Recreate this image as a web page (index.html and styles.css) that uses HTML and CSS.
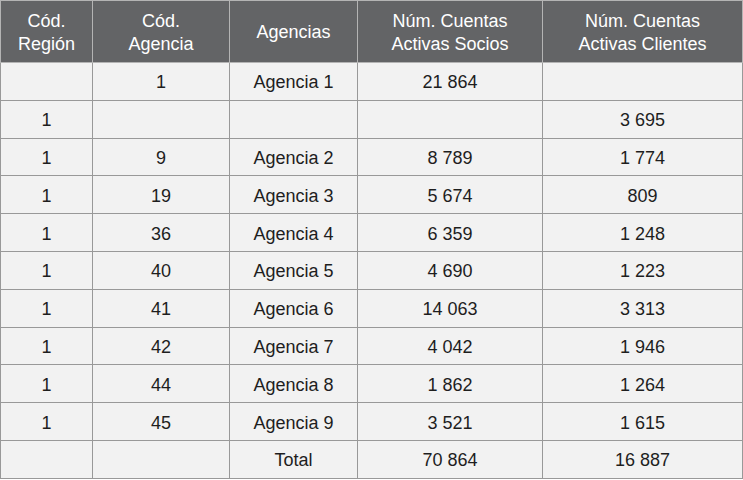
FILE: index.html
```html
<!DOCTYPE html>
<html lang="es">
<head>
<meta charset="utf-8">
<link rel="stylesheet" href="styles.css">
</head>
<body>
<table class="tabla">
  <colgroup>
    <col class="c1"><col class="c2"><col class="c3"><col class="c4"><col class="c5">
  </colgroup>
  <thead>
    <tr>
      <th>Cód.<br>Región</th>
      <th>Cód.<br>Agencia</th>
      <th>Agencias</th>
      <th>Núm. Cuentas<br>Activas Socios</th>
      <th>Núm. Cuentas<br>Activas Clientes</th>
    </tr>
  </thead>
  <tbody>
    <tr><td></td><td>1</td><td>Agencia 1</td><td>21 864</td><td></td></tr>
    <tr><td>1</td><td></td><td></td><td></td><td>3 695</td></tr>
    <tr><td>1</td><td>9</td><td>Agencia 2</td><td>8 789</td><td>1 774</td></tr>
    <tr><td>1</td><td>19</td><td>Agencia 3</td><td>5 674</td><td>809</td></tr>
    <tr><td>1</td><td>36</td><td>Agencia 4</td><td>6 359</td><td>1 248</td></tr>
    <tr><td>1</td><td>40</td><td>Agencia 5</td><td>4 690</td><td>1 223</td></tr>
    <tr><td>1</td><td>41</td><td>Agencia 6</td><td>14 063</td><td>3 313</td></tr>
    <tr><td>1</td><td>42</td><td>Agencia 7</td><td>4 042</td><td>1 946</td></tr>
    <tr><td>1</td><td>44</td><td>Agencia 8</td><td>1 862</td><td>1 264</td></tr>
    <tr><td>1</td><td>45</td><td>Agencia 9</td><td>3 521</td><td>1 615</td></tr>
    <tr><td></td><td></td><td>Total</td><td>70 864</td><td>16 887</td></tr>
  </tbody>
</table>
</body>
</html>
```
FILE: styles.css
```css
html, body {
  margin: 0;
  padding: 0;
  background: #ffffff;
}
.tabla {
  border-collapse: collapse;
  table-layout: fixed;
  width: 742px;
  font-family: "Liberation Sans", Arial, sans-serif;
  font-size: 18px;
  color: #1e1e1e;
}
.c1 { width: 92px; }
.c2 { width: 137px; }
.c3 { width: 128px; }
.c4 { width: 185px; }
.c5 { width: 200px; }
.tabla th {
  background: #636466;
  color: #ffffff;
  font-weight: normal;
  line-height: 23px;
  height: 59px;
  padding: 2px 0 0 0;
  border: 1px solid #b4b4b4;
  text-align: center;
  vertical-align: middle;
}
.tabla td {
  background: #f2f2f2;
  height: 34.8px;
  padding: 2px 0 0 0;
  border: 1px solid #999999;
  text-align: center;
  vertical-align: middle;
  line-height: 20px;
}
```
